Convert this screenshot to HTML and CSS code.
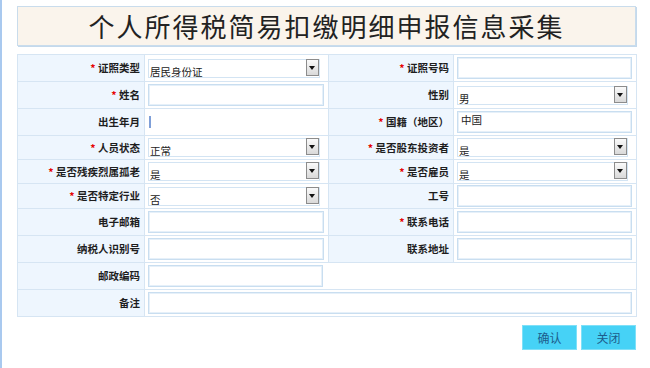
FILE: index.html
```html
<!DOCTYPE html>
<html lang="zh-CN">
<head>
  <meta charset="UTF-8">
  <title>个人所得税简易扣缴明细申报信息采集</title>
  <link rel="stylesheet" href="styles.css">
</head>
<body>
  <div class="page">
    <div class="title-box">个人所得税简易扣缴明细申报信息采集</div>

    <table class="form-table">
      <colgroup>
        <col class="c-label1">
        <col class="c-field1">
        <col class="c-label2">
        <col class="c-field2">
      </colgroup>
      <tr>
        <td class="lbl"><span class="req">*</span> 证照类型</td>
        <td class="fld"><div class="sel"><select><option>居民身份证</option></select><span class="arrow"></span></div></td>
        <td class="lbl"><span class="req">*</span> 证照号码</td>
        <td class="fld"><input type="text"></td>
      </tr>
      <tr>
        <td class="lbl"><span class="req">*</span> 姓名</td>
        <td class="fld"><input type="text"></td>
        <td class="lbl">性别</td>
        <td class="fld"><div class="sel"><select><option>男</option></select><span class="arrow"></span></div></td>
      </tr>
      <tr>
        <td class="lbl">出生年月</td>
        <td class="fld"><input type="text" class="bare"></td>
        <td class="lbl"><span class="req">*</span> 国籍（地区）</td>
        <td class="fld"><input type="text" class="top-text" value="中国"></td>
      </tr>
      <tr>
        <td class="lbl"><span class="req">*</span> 人员状态</td>
        <td class="fld"><div class="sel"><select><option>正常</option></select><span class="arrow"></span></div></td>
        <td class="lbl"><span class="req">*</span> 是否股东投资者</td>
        <td class="fld"><div class="sel"><select><option>是</option></select><span class="arrow"></span></div></td>
      </tr>
      <tr>
        <td class="lbl"><span class="req">*</span> 是否残疾烈属孤老</td>
        <td class="fld"><div class="sel"><select><option>是</option></select><span class="arrow"></span></div></td>
        <td class="lbl"><span class="req">*</span> 是否雇员</td>
        <td class="fld"><div class="sel"><select><option>是</option></select><span class="arrow"></span></div></td>
      </tr>
      <tr class="row-tight">
        <td class="lbl"><span class="req">*</span> 是否特定行业</td>
        <td class="fld"><div class="sel"><select><option>否</option></select><span class="arrow"></span></div></td>
        <td class="lbl">工号</td>
        <td class="fld"><input type="text"></td>
      </tr>
      <tr>
        <td class="lbl">电子邮箱</td>
        <td class="fld"><input type="text"></td>
        <td class="lbl"><span class="req">*</span> 联系电话</td>
        <td class="fld"><input type="text"></td>
      </tr>
      <tr>
        <td class="lbl">纳税人识别号</td>
        <td class="fld"><input type="text"></td>
        <td class="lbl">联系地址</td>
        <td class="fld"><input type="text"></td>
      </tr>
      <tr>
        <td class="lbl">邮政编码</td>
        <td class="fld" colspan="3"><input type="text" class="short"></td>
      </tr>
      <tr>
        <td class="lbl">备注</td>
        <td class="fld" colspan="3"><input type="text"></td>
      </tr>
    </table>

    <div class="actions">
      <button>确认</button>
      <button>关闭</button>
    </div>
  </div>
</body>
</html>
```

FILE: styles.css
```css
body {
  margin: 0;
  font-family: "Noto Sans CJK SC", "Noto Sans", sans-serif;
  background: #fff;
}
.page {
  border-left: 2px solid #a9c9ef;
  min-height: 368px;
  box-sizing: border-box;
  padding: 6px 0 0 15px;
}
.title-box {
  width: 617px;
  height: 38px;
  background: #faf4ec;
  border: 1px solid #c9dcec;
  box-shadow: 1px 1px 0 #c4d9ec;
  text-align: center;
  font-size: 26px;
  line-height: 38px;
  letter-spacing: 2px;
  color: #222;
}
.form-table {
  margin-top: 8px;
  width: 619px;
  border-collapse: collapse;
  table-layout: fixed;
  border: 1px solid #d3e3f2;
}
.c-label1 { width: 127px; }
.c-field1 { width: 184px; }
.c-label2 { width: 125px; }
.c-field2 { width: 183px; }
.form-table td {
  border: 1px solid #d6e5f3;
  padding: 2px 4px 2px 3px;
}
.form-table tr.row-tight td {
  padding-top: 1px;
  padding-bottom: 1px;
}
.lbl {
  background: #eef6fe;
  text-align: right;
  font-size: 10.5px;
  line-height: 14px;
  font-weight: bold;
  color: #1e1e1e;
  white-space: nowrap;
}
.req {
  color: #e60000;
}
.fld {
  background: #fff;
}
input[type="text"] {
  display: block;
  width: 100%;
  height: 22px;
  box-sizing: border-box;
  border: 1px solid #c9def0;
  box-shadow: inset 0 0 0 1px #e6f0f9;
  padding: 0 3px;
  font-family: inherit;
  font-size: 10.5px;
  color: #222;
  outline: none;
}
input.top-text {
  padding-bottom: 6px;
}
input.short {
  width: 175px;
}
input.bare {
  border: none;
  box-shadow: none;
  border-left: 2px solid #7f9fd8;
  height: 12px;
  width: 160px;
  margin: 4px 0 5px 1px;
}
.sel {
  position: relative;
  width: calc(100% - 4px);
  height: 19px;
}
.sel select {
  appearance: none;
  -webkit-appearance: none;
  display: block;
  width: 100%;
  height: 19px;
  box-sizing: border-box;
  border: 1px solid #d3e4f3;
  background: #fff;
  padding: 4px 0 0 1px;
  font-family: inherit;
  font-size: 10.5px;
  color: #222;
  outline: none;
}
.arrow {
  position: absolute;
  right: 1px;
  top: 0;
  width: 13px;
  height: 17px;
  box-sizing: border-box;
  border: 1px solid #8c8c8c;
  background: linear-gradient(#fafafa, #d9d9d9);
}
.arrow::after {
  content: "";
  position: absolute;
  left: 2px;
  top: 6px;
  border-left: 3.5px solid transparent;
  border-right: 3.5px solid transparent;
  border-top: 4px solid #111;
}
.actions {
  width: 619px;
  display: flex;
  justify-content: flex-end;
  gap: 4px;
  margin-top: 8px;
}
.actions button {
  width: 55px;
  height: 25px;
  background: #46d2f6;
  border: 1px solid #7fe0f8;
  color: #1d5d8c;
  font-family: inherit;
  font-size: 12px;
  padding: 0;
  cursor: pointer;
}
```
